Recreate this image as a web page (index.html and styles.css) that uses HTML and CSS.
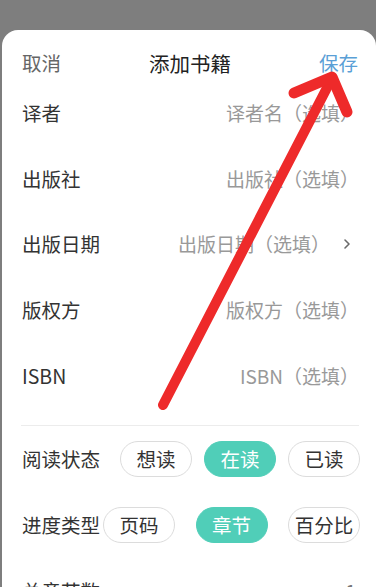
FILE: index.html
```html
<!DOCTYPE html>
<html lang="zh">
<head>
<meta charset="utf-8">
<title>添加书籍</title>
<link rel="stylesheet" href="styles.css">
</head>
<body>
<div class="sheet">
  <div class="header">
    <span class="cancel">取消</span>
    <span class="title">添加书籍</span>
    <span class="save">保存</span>
  </div>
  <div class="rows">
    <div class="row"><span class="label">译者</span><span class="ph">译者名（选填）</span></div>
    <div class="row"><span class="label">出版社</span><span class="ph">出版社（选填）</span></div>
    <div class="row"><span class="label">出版日期</span><span class="ph">出版日期（选填）<svg class="chev" width="8" height="12" viewBox="0 0 8 12"><polyline points="2,2 6,6 2,10" fill="none" stroke="#6a6a6a" stroke-width="1.6" stroke-linecap="round" stroke-linejoin="round"/></svg></span></div>
    <div class="row"><span class="label">版权方</span><span class="ph">版权方（选填）</span></div>
    <div class="row"><span class="label">ISBN</span><span class="ph">ISBN（选填）</span></div>
  </div>
  <div class="divider"></div>
  <div class="prow">
    <span class="label">阅读状态</span>
    <div class="pills pills-status">
      <span class="pill">想读</span>
      <span class="pill on">在读</span>
      <span class="pill">已读</span>
    </div>
  </div>
  <div class="prow">
    <span class="label">进度类型</span>
    <div class="pills pills-type">
      <span class="pill">页码</span>
      <span class="pill on">章节</span>
      <span class="pill">百分比</span>
    </div>
  </div>
  <div class="prow">
    <span class="label">总章节数</span>
    <span class="ph last">1</span>
  </div>
</div>
<svg class="arrow" width="376" height="587" viewBox="0 0 376 587">
  <line x1="163" y1="405" x2="330" y2="82" stroke="#ee2a2a" stroke-width="10" stroke-linecap="round"/>
  <polyline points="294,93 332,77 347,112" fill="none" stroke="#ee2a2a" stroke-width="11" stroke-linecap="round" stroke-linejoin="round"/>
</svg>
</body>
</html>
```

FILE: styles.css
```css
html, body {
  margin: 0;
  padding: 0;
}
body {
  width: 376px;
  height: 587px;
  overflow: hidden;
  background: #7e7e7e;
  font-family: "Noto Sans CJK SC", "Noto Sans", sans-serif;
  position: relative;
}
.sheet {
  margin: 30px 0 0 2px;
  width: 374px;
  height: 557px;
  background: #fff;
  border-radius: 16px 16px 0 0;
  overflow: hidden;
}
.header {
  height: 50px;
  box-sizing: border-box;
  padding: 16px 18px 0 20px;
  display: flex;
  justify-content: space-between;
  align-items: flex-start;
  line-height: 34px;
  font-size: 19.5px;
}
.cancel { color: #666; }
.title { color: #222; font-size: 20.5px; }
.save { color: #5a9fd6; }
.rows {
  display: flex;
  flex-direction: column;
}
.row {
  height: 65.6px;
  display: flex;
  align-items: center;
  justify-content: space-between;
  padding: 0 17px 0 20px;
}
.label {
  font-size: 19.5px;
  color: #333;
  white-space: nowrap;
}
.ph {
  font-size: 19px;
  color: #999;
  white-space: nowrap;
  display: flex;
  align-items: center;
}
.chev {
  margin-left: 13px;
  margin-right: 8px;
}
.divider {
  margin: 17px 17px 0 19px;
  height: 1px;
  background: #ececec;
}
.prow {
  height: 66px;
  display: flex;
  align-items: center;
  padding: 0 16px 0 20px;
  justify-content: space-between;
}
.pills {
  display: flex;
  justify-content: space-between;
  flex: 1;
}
.pills-status { margin-left: 20px; }
.pills-type { margin-left: 3px; }
.pill {
  width: 72px;
  height: 36px;
  box-sizing: border-box;
  border: 1px solid #dcdcdc;
  border-radius: 18px;
  display: flex;
  align-items: center;
  justify-content: center;
  font-size: 19.5px;
  color: #333;
}
.pill.on {
  background: #50ceb8;
  border-color: #50ceb8;
  color: #fff;
}
.last {
  color: #777;
  margin-right: 4px;
}
.arrow {
  position: absolute;
  left: 0;
  top: 0;
  pointer-events: none;
}
```
